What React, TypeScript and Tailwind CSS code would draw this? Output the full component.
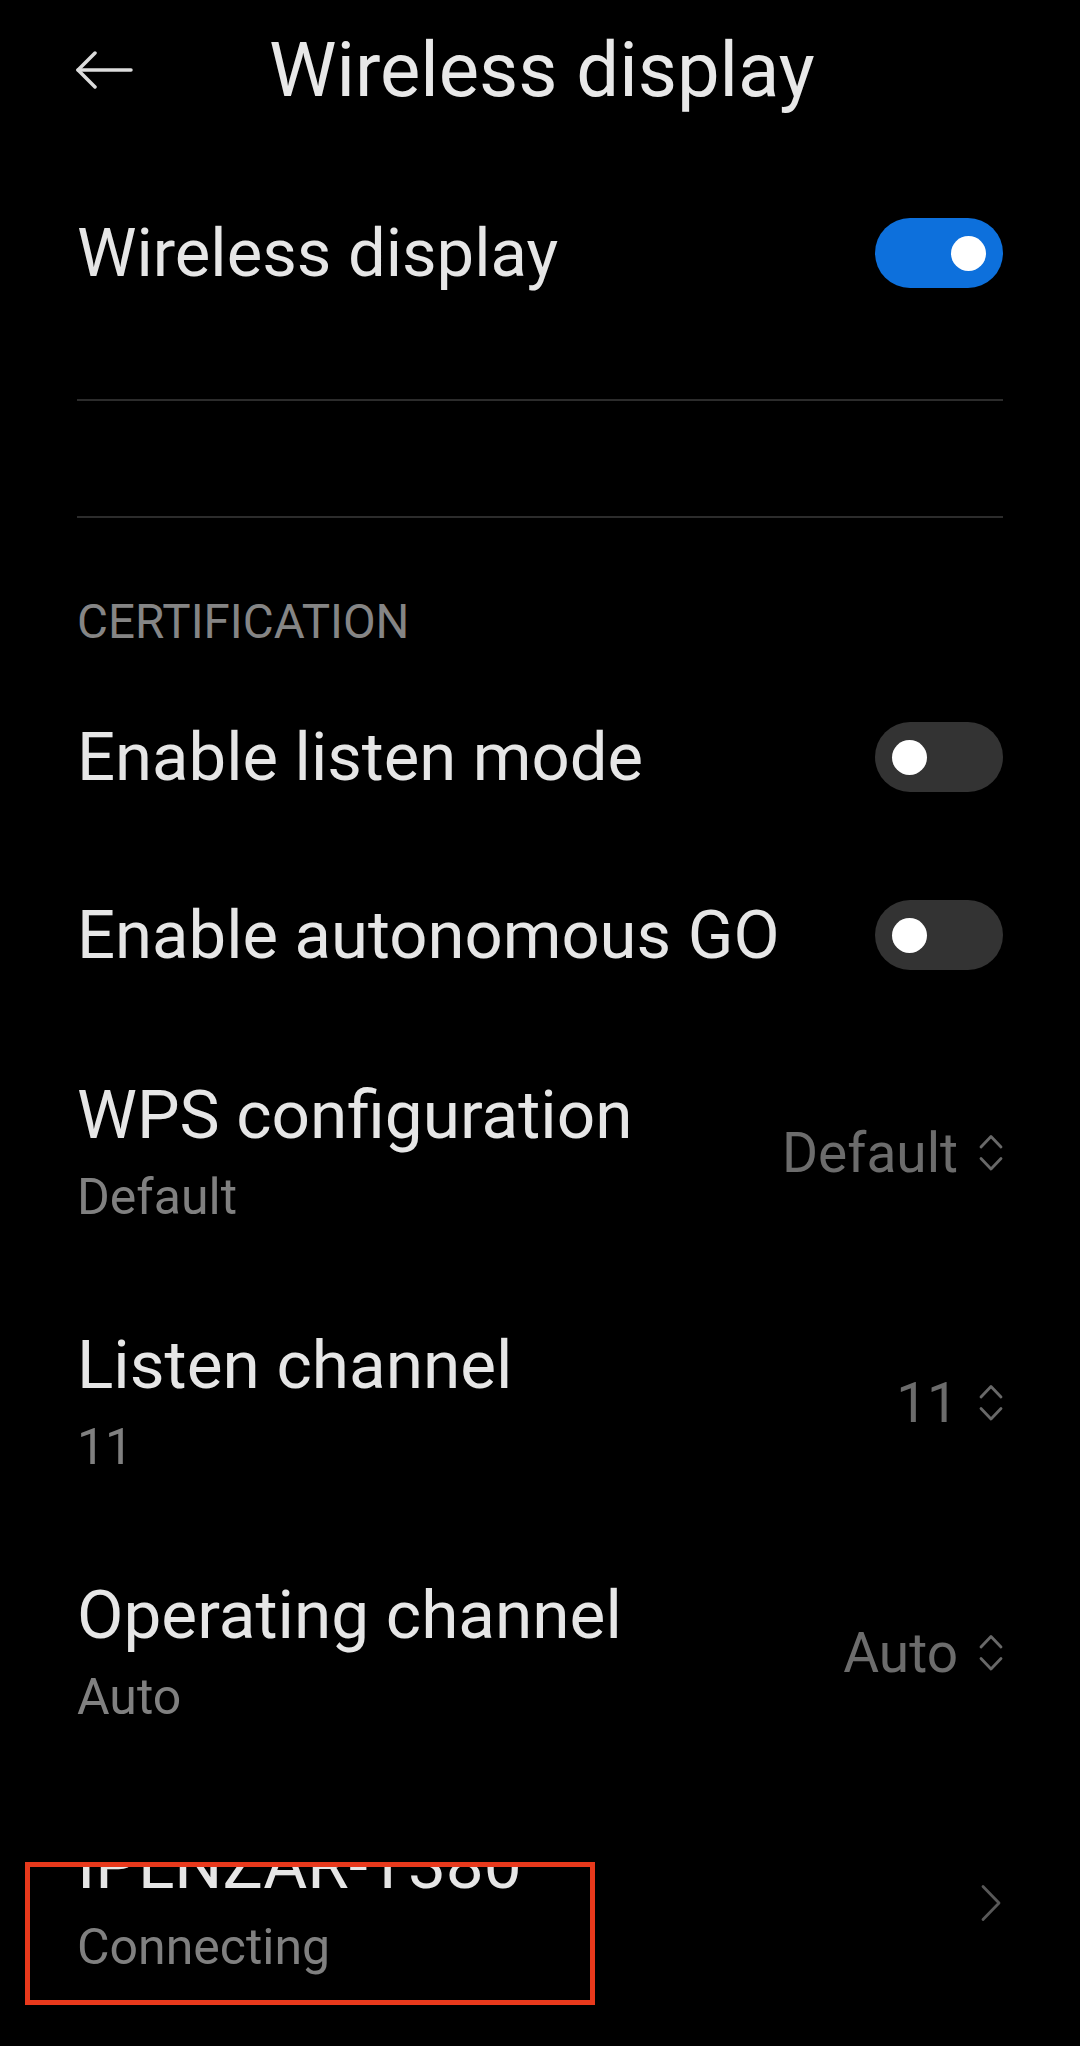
import React from "react";

const font = { fontFamily: "Roboto, 'Noto Sans', sans-serif" };

function Toggle({ on }: { on: boolean }) {
  return (
    <div
      className={`flex h-[70px] w-[128px] shrink-0 items-center rounded-full px-[17px] ${
        on ? "justify-end bg-[#0d70dc]" : "justify-start bg-[#333333]"
      }`}
    >
      <div className="h-[35px] w-[35px] rounded-full bg-white" />
    </div>
  );
}

function UpDown() {
  return (
    <svg width="24" height="38" viewBox="0 0 24 38" fill="none" className="shrink-0">
      <path d="M2 13 L12 2.5 L22 13" stroke="#686868" strokeWidth="2.8" strokeLinecap="round" strokeLinejoin="round" />
      <path d="M2 24.5 L12 35 L22 24.5" stroke="#686868" strokeWidth="2.8" strokeLinecap="round" strokeLinejoin="round" />
    </svg>
  );
}

function SelectRow({ title, sub, value }: { title: string; sub: string; value: string }) {
  return (
    <div className="flex items-center justify-between">
      <div className="flex flex-col">
        <div className="text-[67.5px] leading-[78px] text-[#e6e6e6]">{title}</div>
        <div className="mt-[11px] text-[50px] leading-[64px] text-[#808080]">{sub}</div>
      </div>
      <div className="flex items-center gap-[21px]">
        <span className="text-[55px] leading-[64px] text-[#6c6c6c]">{value}</span>
        <UpDown />
      </div>
    </div>
  );
}

export default function App() {
  return (
    <div className="relative h-[2046px] w-[1080px] overflow-hidden bg-black" style={font}>
      {/* Header */}
      <div className="flex h-[140px] items-center pl-[75px]">
        <svg width="58" height="38" viewBox="0 0 58 38" fill="none" className="shrink-0">
          <path d="M3 19 H56" stroke="#dcdcdc" strokeWidth="3.5" strokeLinecap="round" />
          <path d="M20 2 L3 19 L20 36" stroke="#dcdcdc" strokeWidth="3.5" strokeLinecap="round" strokeLinejoin="round" />
        </svg>
        <div className="ml-[136px] text-[76px] leading-[90px] text-[#e8e8e8]">Wireless display</div>
      </div>

      <div className="flex flex-col pl-[77px] pr-[77px]">
        {/* Wireless display toggle */}
        <div className="flex h-[226px] items-center justify-between">
          <span className="text-[67px] leading-[80px] text-[#e6e6e6]">Wireless display</span>
          <Toggle on={true} />
        </div>

        <div className="mt-[33px] h-[2px] bg-[#2c2c2c]" />
        <div className="mt-[115px] h-[2px] bg-[#2c2c2c]" />

        <div className="mt-[76px] text-[47.5px] leading-[56px] text-[#858585]">CERTIFICATION</div>

        <div className="mt-[18px] flex h-[178px] items-center justify-between">
          <span className="text-[67px] leading-[80px] text-[#e6e6e6]">Enable listen mode</span>
          <Toggle on={false} />
        </div>
        <div className="flex h-[178px] items-center justify-between">
          <span className="text-[67px] leading-[80px] text-[#e6e6e6]">Enable autonomous GO</span>
          <Toggle on={false} />
        </div>

        <div className="flex flex-col gap-[97px] pt-[52px]">
          <SelectRow title="WPS configuration" sub="Default" value="Default" />
          <SelectRow title="Listen channel" sub="11" value="11" />
          <SelectRow title="Operating channel" sub="Auto" value="Auto" />

          <div className="flex items-center justify-between">
            <div className="flex flex-col">
              <div className="mt-[38px] flex h-[40px] flex-col justify-end overflow-hidden">
                <div className="shrink-0 text-[67.5px] leading-[78px] text-[#e6e6e6]">IPLNZAR-T380</div>
              </div>
              <div className="mt-[11px] text-[50px] leading-[64px] text-[#808080]">Connecting</div>
            </div>
            <svg width="22" height="38" viewBox="0 0 22 38" fill="none" className="mr-[1px] shrink-0">
              <path d="M3 2.5 L19 19 L3 35.5" stroke="#585858" strokeWidth="2.8" strokeLinecap="round" strokeLinejoin="round" />
            </svg>
          </div>
        </div>
      </div>

      {/* Annotation box */}
      <div className="pointer-events-none absolute left-[25px] top-[1862px] h-[143px] w-[570px] border-[5px] border-[#e8391c]" />
    </div>
  );
}
